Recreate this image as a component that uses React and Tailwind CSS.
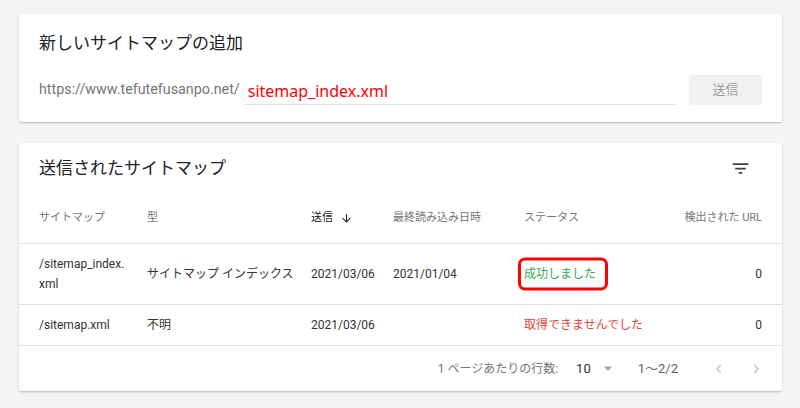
import React from "react"

const font = { fontFamily: '"Roboto", "Noto Sans CJK JP", sans-serif' }

const FilterIcon = () => (
  <svg width="21" height="21" viewBox="0 0 24 24" className="text-[#3c4043]">
    <path fill="currentColor" d="M10 18h4v-2h-4v2zM3 6v2h18V6H3zm3 7h12v-2H6v2z" />
  </svg>
)

const Row = ({ cells, tall }) => (
  <div className={`grid grid-cols-[108px_164px_82px_131px_1fr_auto] items-center border-b border-[#e0e0e0] px-5 text-[12px] text-[#333333] ${tall ? "h-[61px]" : "h-[41px]"}`}>
    {cells}
  </div>
)

const App = () => {
  return (
    <div className="w-[800px] h-[408px] bg-[#f4f4f4] pt-[14px] pl-[19px]" style={font}>
      <div className="w-[763px] h-[108px] bg-white rounded-[2px] shadow-[0_1px_2px_rgba(0,0,0,0.25)] px-5 pt-[17px]">
        <h1 className="text-[17px] leading-6 text-[#202124]">新しいサイトマップの追加</h1>
        <div className="flex items-center mt-[20px] h-[30px]">
          <span className="text-[14.3px] text-[#757575]">https://www.tefutefusanpo.net/</span>
          <div className="ml-1 w-[433px] h-[30px] border-b border-[#e0e0e0] flex items-center pl-1 pt-[2px]">
            <span className="text-[16px] text-[#ff0000]" style={{ fontFamily: '"Noto Sans", sans-serif' }}>sitemap_index.xml</span>
          </div>
          <button className="ml-[14px] w-[73px] h-[30px] bg-[#f1f1f1] rounded-[3px] text-[13px] text-[#9a9a9a]">送信</button>
        </div>
      </div>

      <div className="mt-[21px] w-[763px] h-[248px] bg-white rounded-[2px] shadow-[0_1px_2px_rgba(0,0,0,0.25)]">
        <div className="h-[50px] flex items-center justify-between pl-5 pr-[31px]">
          <h2 className="text-[17px] leading-6 text-[#202124]">送信されたサイトマップ</h2>
          <FilterIcon />
        </div>
        <div className="grid grid-cols-[108px_164px_82px_131px_1fr_auto] items-center h-[51px] border-b border-[#e0e0e0] px-5 text-[11px] text-[#757575]">
          <span>サイトマップ</span>
          <span>型</span>
          <span className="flex items-center gap-[7px] text-[#202124]">
            送信
            <svg width="13" height="13" viewBox="0 0 24 24">
              <path fill="currentColor" d="M20 12l-1.41-1.41L13 16.17V4h-2v12.17l-5.58-5.59L4 12l8 8 8-8z" />
            </svg>
          </span>
          <span>最終読み込み日時</span>
          <span>ステータス</span>
          <span className="text-right">検出された URL</span>
        </div>
        <Row
          tall
          cells={
            <>
              <span className="leading-5">/sitemap_index.<br />xml</span>
              <span>サイトマップ インデックス</span>
              <span>2021/03/06</span>
              <span>2021/01/04</span>
              <span className="relative">
                <span className="text-[#34a853]">成功しました</span>
                <span className="absolute -left-[6px] top-1/2 -translate-y-1/2 w-[90px] h-[33px] border-[3px] border-[#ff0000] rounded-[7px]" />
              </span>
              <span className="text-right">0</span>
            </>
          }
        />
        <Row
          cells={
            <>
              <span>/sitemap.xml</span>
              <span>不明</span>
              <span>2021/03/06</span>
              <span></span>
              <span className="text-[#e5423a]">取得できませんでした</span>
              <span className="text-right">0</span>
            </>
          }
        />
        <div className="h-[46px] flex items-center justify-end pr-[18px] text-[12px] text-[#757575]">
          <span>1 ページあたりの行数:</span>
          <span className="ml-[18px] text-[#333333] text-[13px]">10</span>
          <svg width="12" height="12" viewBox="0 0 24 24" className="ml-[11px]">
            <path fill="#9e9e9e" d="M4 7h16l-8 9z" />
          </svg>
          <span className="ml-[24px] text-[#5f6368] text-[13px]">1～2/2</span>
          <svg width="16" height="16" viewBox="0 0 24 24" className="ml-[33px]">
            <path fill="none" stroke="#bdbdbd" strokeWidth="1.8" d="M14.5 6l-5.5 6 5.5 6" />
          </svg>
          <svg width="16" height="16" viewBox="0 0 24 24" className="ml-[21px]">
            <path fill="none" stroke="#bdbdbd" strokeWidth="1.8" d="M9.5 6l5.5 6-5.5 6" />
          </svg>
        </div>
      </div>
    </div>
  )
}

export default App
